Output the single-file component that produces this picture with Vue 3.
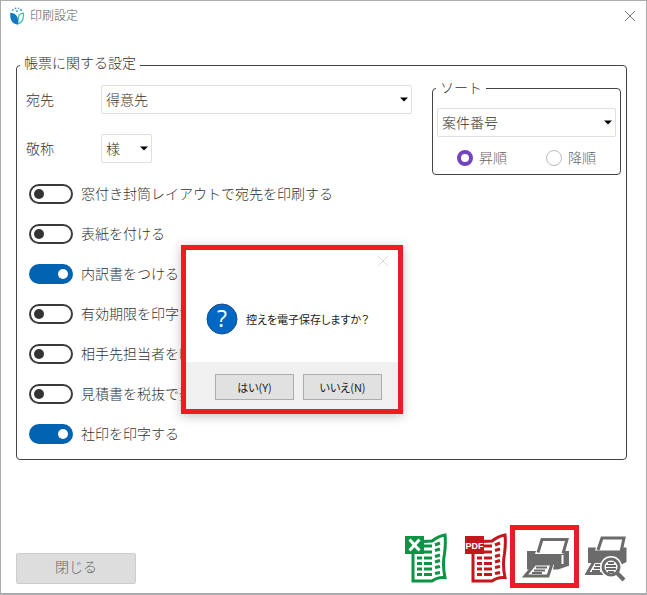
<template>
  <div class="page">
    <main class="window">
      <header class="title-bar">
        <svg class="app-icon" viewBox="0 0 14 18" aria-hidden="true">
          <path d="M9 8c1-1 2.500-1.600 4.300-1.800C13.800 12 12 16 7.500 17z" fill="#fff" stroke="#45bd9b" stroke-width="1.200" />
          <path d="M.3 5.800C5.500 6 9 9.500 8 17.500 2.500 17.500-.5 13 .3 5.800z" fill="#1478c0" />
          <circle cx="2.800" cy="3" r="1" fill="#49b6d6" />
          <circle cx="5.500" cy="1.300" r=".9" fill="#2f92cc" />
          <circle cx="8.500" cy="1.300" r=".9" fill="#49b6d6" />
          <circle cx="11" cy="3" r="1" fill="#2f92cc" />
          <circle cx="7" cy="4.200" r=".9" fill="#2f92cc" />
        </svg>
        <h1>印刷設定</h1>
        <button class="btn-x" type="button" aria-label="ウィンドウを閉じる">
          <svg viewBox="0 0 12 12"><path d="M1 1l10 10M11 1L1 11" /></svg>
        </button>
      </header>

      <fieldset class="settings">
        <legend>帳票に関する設定</legend>
        <div class="top">
          <div class="fields">
            <label for="address">宛先</label>
            <div class="select">
              <select id="address" v-model="address">
                <option>得意先</option>
              </select>
              <svg viewBox="0 0 8 5" aria-hidden="true"><path d="M0 .5h8L4 4.500z" /></svg>
            </div>
            <label for="honorific">敬称</label>
            <div class="select small">
              <select id="honorific" v-model="honorific">
                <option>様</option>
                <option>御中</option>
              </select>
              <svg viewBox="0 0 8 5" aria-hidden="true"><path d="M0 .5h8L4 4.500z" /></svg>
            </div>
          </div>

          <fieldset class="sort">
            <legend>ソート</legend>
            <div class="select">
              <select v-model="sortKey" aria-label="ソート">
                <option>案件番号</option>
              </select>
              <svg viewBox="0 0 8 5" aria-hidden="true"><path d="M0 .5h8L4 4.500z" /></svg>
            </div>
            <div class="radios">
              <label><input type="radio" value="asc" v-model="order" /><span>昇順</span></label>
              <label><input type="radio" value="desc" v-model="order" /><span>降順</span></label>
            </div>
          </fieldset>
        </div>

        <div class="toggles">
          <label v-for="item in toggles" :key="item.label">
            <input type="checkbox" v-model="item.on" />
            <span>{{ item.label }}</span>
          </label>
        </div>
      </fieldset>

      <footer class="actions">
        <button class="btn-close" type="button">閉じる</button>
        <button
          v-for="doc in documents"
          :key="doc.name"
          class="btn-icon"
          :class="doc.name"
          type="button"
          :aria-label="doc.label"
        >
          <svg viewBox="0 0 42 50">
            <path class="sheet" d="M8 9v39h19c4-3 8-4 13-3.500-2-9-2-16-.5-24 1-7 1.200-12 .5-18.500-5 .5-9 3-13 6z" />
            <path class="lines" d="M19 13h8M19 19h8M12 25h5M12 30.500h5M12 36h5M12 41.500h5M19 25h8M19 30.500h8M19 36h8M19 41.500h8M30 12l5-2M30 17.500l5-1.500M30 23.500l5-1.500M30 29l5-1.500M30 34.500l5-1M30 40.500l5-1" />
            <rect class="badge" x="0" y="3" width="19" height="18" />
            <path v-if="doc.name === 'excel'" class="cross" d="M4.500 6.500l10 11M14.500 6.500l-10 11" />
            <text v-else x="9.500" y="16" text-anchor="middle">PDF</text>
          </svg>
        </button>
        <button class="btn-icon print" type="button" aria-label="印刷">
          <svg viewBox="0 0 49 44">
            <path class="paper" d="M18 18l4-13h25l-4 14" />
            <path class="body" d="M7 16.500h9l-1 3h29l1-3h5v14.500l-12 4h-5l1-5H15l-2 5H7z" />
            <path class="slot" d="M42.500 20.500v9" />
            <path class="paper" d="M15 29.500h17l-4 12H5z" />
            <path class="rows" d="M16 33h11M14 36h11M12 38.500h10" />
          </svg>
        </button>
        <button class="btn-icon preview" type="button" aria-label="印刷プレビュー">
          <svg viewBox="0 0 42 46">
            <path class="paper" d="M13 14l4-12h22l-3 14" />
            <path class="body" d="M3 11.500h8l-1 3h26l1-3h4.500V26l-6 3H11l-2-2H3z" />
            <path class="paper" d="M9 25.500h15l-3 12H2z" />
            <path class="rows" d="M10 29h6M9 32h6M7 35h8" />
            <circle class="halo" cx="26" cy="31" r="11" />
            <path class="handle" d="M32 37l7 7" />
            <circle class="lens" cx="26" cy="31" r="8" />
            <path class="rows" d="M23 27h6M21 30h10M21 33h10M23 36h6" />
          </svg>
        </button>
      </footer>
    </main>

    <section class="dialog" role="dialog" aria-labelledby="dialog-message">
      <button class="btn-x" type="button" aria-label="ダイアログを閉じる">
        <svg viewBox="0 0 12 12"><path d="M1 1l10 10M11 1L1 11" /></svg>
      </button>
      <div class="dialog-body">
        <svg viewBox="0 0 32 32" aria-hidden="true">
          <circle cx="16" cy="16" r="15" fill="#0067c5" stroke="#174e83" />
          <text x="16" y="24" text-anchor="middle">?</text>
        </svg>
        <p id="dialog-message">控えを電子保存しますか？</p>
      </div>
      <div class="dialog-buttons">
        <button type="button">はい(Y)</button>
        <button type="button">いいえ(N)</button>
      </div>
    </section>
  </div>
</template>

<script setup>
import { ref } from 'vue';

const address = ref('得意先');
const honorific = ref('様');
const sortKey = ref('案件番号');
const order = ref('asc');

const toggles = ref([
  { label: '窓付き封筒レイアウトで宛先を印刷する', on: false },
  { label: '表紙を付ける', on: false },
  { label: '内訳書をつける', on: true },
  { label: '有効期限を印字する', on: false },
  { label: '相手先担当者を印字する', on: false },
  { label: '見積書を税抜で発行する', on: false },
  { label: '社印を印字する', on: true },
]);

const documents = [
  { name: 'excel', label: 'Excel出力' },
  { name: 'pdf', label: 'PDF出力' },
];
</script>

<style>
body {
  margin: 0;
  background-color: #a9abad;
}
</style>

<style scoped>
* {
  box-sizing: border-box;
}

.page {
  position: relative;
  display: flex;
  flex-direction: column;
  min-height: 100vh;
  padding: 1px 1px 2px;
  color: #333;
  font-family: "Noto Sans CJK JP", "Noto Sans", sans-serif;
  font-size: 14px;
  font-weight: 300;
  line-height: 16px;
}

button,
select {
  font: inherit;
  color: inherit;
}

.window {
  flex: 1;
  display: flex;
  flex-direction: column;
  background-color: #fff;
}

.title-bar {
  display: flex;
  align-items: center;
  height: 29px;
  margin-bottom: 24px;
  padding: 0 10px 0 9px;
}

.app-icon {
  width: 14px;
  height: 18px;
  margin-right: 6px;
}

.title-bar h1 {
  flex: 1;
  margin: 0;
  padding-bottom: 2px;
  font-size: 12px;
  font-weight: 300;
  color: #555;
}

.btn-x {
  display: flex;
  padding: 0;
  border: none;
  background: none;
}

.btn-x svg {
  width: 12px;
  height: 12px;
  fill: none;
  stroke: #777;
}

fieldset {
  min-width: 0;
  margin: 0;
  border: 1px solid #444;
  border-radius: 4px;
}

.settings {
  margin: 0 19px 0 15px;
  padding: 3px 5px 15px 9px;
}

legend {
  padding: 0 4px;
}

.settings > legend {
  margin-left: -6px;
  padding-bottom: 6px;
}

.top {
  display: flex;
  align-items: flex-start;
  gap: 20px;
}

.fields {
  flex: 1;
  display: grid;
  grid-template-columns: 75px 1fr;
  align-items: center;
  row-gap: 20px;
  padding-top: 6px;
}

.fields label,
.radios span,
.toggles span {
  padding-bottom: 2px;
}

.select {
  display: grid;
  align-items: center;
}

.select.small {
  width: 51px;
}

.select select,
.select svg {
  grid-area: 1 / 1;
}

.select select {
  appearance: none;
  width: 100%;
  height: 29px;
  padding: 0 16px 2px 4px;
  border: 1px solid #dcdfe6;
  border-radius: 2px;
  background-color: #fff;
}

.select svg {
  justify-self: end;
  width: 8px;
  height: 5px;
  margin-right: 4px;
  fill: #000;
  pointer-events: none;
}

.sort {
  width: 189px;
  padding: 11px 4px 8px;
}

.sort legend {
  margin-left: -1px;
  padding-bottom: 2px;
}

.radios {
  display: flex;
  gap: 39px;
  margin-top: 13px;
  padding-left: 20px;
  color: #666;
}

.radios label {
  display: flex;
  align-items: center;
  gap: 6px;
  height: 16px;
}

.radios input {
  appearance: none;
  width: 16px;
  height: 16px;
  margin: 0;
  border: 1px solid #bbb;
  border-radius: 50%;
}

.radios input:checked {
  border: 4px solid #7444bd;
}

.toggles {
  display: flex;
  flex-direction: column;
  gap: 20px;
  margin: 9px 0 0 3px;
}

.toggles label {
  display: flex;
  align-items: center;
  gap: 8px;
}

.toggles input {
  appearance: none;
  display: flex;
  align-items: center;
  width: 44px;
  height: 20px;
  margin: 0;
  padding: 0 3px;
  border: 2px solid #3a3a3a;
  border-radius: 10px;
}

.toggles input::before {
  content: "";
  width: 10px;
  height: 10px;
  border-radius: 50%;
  background-color: #333;
}

.toggles input:checked {
  justify-content: flex-end;
  border-color: #0063b1;
  background-color: #0063b1;
}

.toggles input:checked::before {
  background-color: #fff;
}

.actions {
  display: flex;
  align-items: flex-end;
  margin-top: auto;
  padding: 64px 19px 5px 15px;
}

.btn-close {
  width: 120px;
  height: 31px;
  margin: 0 auto 4px 0;
  padding: 0 0 5px;
  border: 1px solid #ccc;
  border-radius: 2px;
  background-color: #ddd;
  color: #666;
}

.btn-icon {
  display: flex;
  padding: 0;
  border: none;
  background: none;
}

.btn-icon svg {
  width: 42px;
  height: 50px;
  fill: none;
  stroke-width: 2;
}

.excel,
.pdf {
  margin: 0 18px 5px 0;
}

.pdf {
  margin-right: 3px;
}

.excel {
  color: #0b9444;
}

.pdf {
  color: #c5161d;
}

.sheet {
  stroke: currentColor;
  stroke-width: 3;
}

.lines {
  stroke: currentColor;
  stroke-width: 3;
}

.badge {
  fill: currentColor;
}

.cross {
  stroke: #fff;
  stroke-width: 3;
}

.pdf text {
  fill: #fff;
  font-family: "Liberation Sans", sans-serif;
  font-size: 9px;
  font-weight: 700;
}

.paper {
  fill: #fff;
  stroke: #6b6b6b;
  stroke-width: 3;
}

.body {
  fill: #6b6b6b;
}

.slot {
  stroke: #fff;
}

.rows {
  stroke: #6b6b6b;
}

.halo {
  fill: #fff;
}

.lens {
  fill: #fff;
  stroke: #6b6b6b;
  stroke-width: 3;
}

.handle {
  stroke: #6b6b6b;
  stroke-width: 4;
}

.print {
  margin-right: 6px;
  padding: 4px 5px;
  border: 5px solid #ed1c24;
}

.print svg {
  width: 49px;
  height: 45px;
}

.preview {
  margin-bottom: 6px;
}

.preview svg {
  width: 42px;
  height: 46px;
}

/* confirmation dialog floats over the settings */
.dialog {
  position: absolute;
  top: 245px;
  left: 181px;
  display: flex;
  flex-direction: column;
  width: 222px;
  border: 5px solid #ed1c24;
  background-color: #fff;
  color: #222;
  box-shadow: 0 2px 10px rgba(0, 0, 0, 0.25);
  font-size: 11px;
  font-weight: 400;
  font-feature-settings: "palt";
}

.dialog .btn-x {
  align-self: flex-end;
  margin: 5px 9px 0 0;
}

.dialog .btn-x svg {
  stroke: #ddd;
}

.dialog-body {
  display: flex;
  align-items: center;
  gap: 8px;
  padding: 36px 20px 27px;
}

.dialog-body svg {
  width: 32px;
  height: 32px;
}

.dialog-body text {
  fill: #fff;
  font-family: "Open Sans", sans-serif;
  font-size: 23px;
}

.dialog-body p {
  margin: 0;
  white-space: nowrap;
}

.dialog-buttons {
  display: flex;
  justify-content: flex-end;
  gap: 9px;
  padding: 12px 16px 9px;
  background-color: #f0f0f0;
}

.dialog-buttons button {
  width: 79px;
  height: 26px;
  padding: 0;
  border: 1px solid #adadad;
  background-color: #e1e1e1;
}
</style>
